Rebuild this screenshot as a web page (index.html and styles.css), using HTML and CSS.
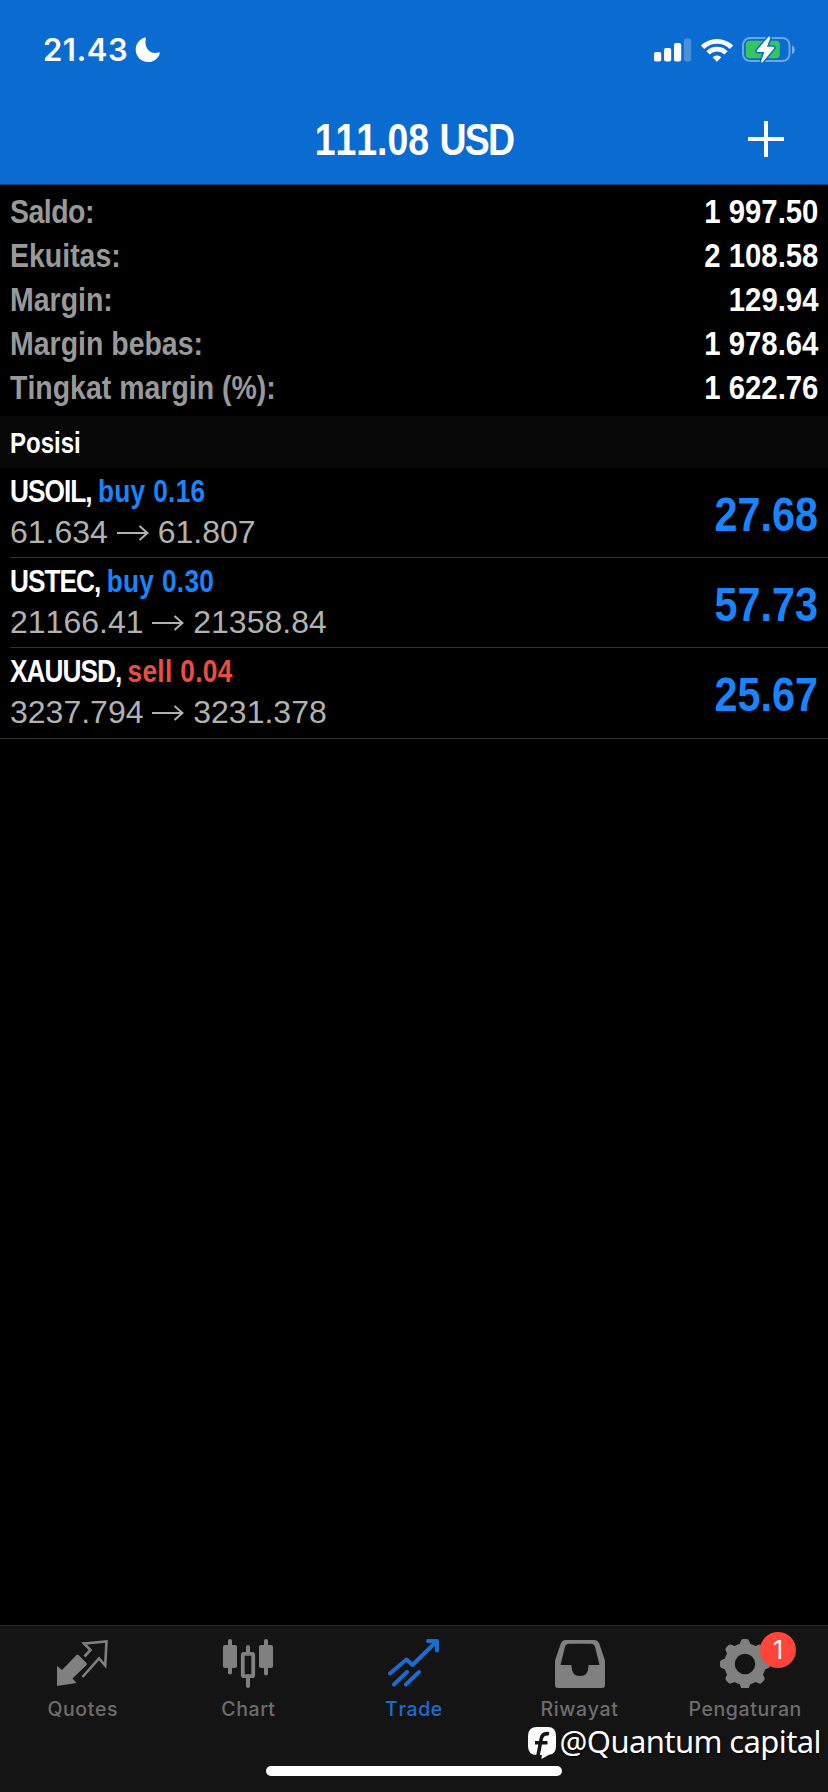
FILE: index.html
```html
<!DOCTYPE html>
<html lang="id">
<head>
    <meta charset="UTF-8">
    <meta name="viewport" content="width=device-width, initial-scale=1.0">
    <title>Trade</title>
    <link rel="stylesheet" href="styles.css">
</head>
<body>
    <div class="app">
        <header class="header">
            <div class="status-bar">
                <span class="time">21.43</span>
                <svg class="moon" width="26" height="26" viewBox="0 0 26 26"><path fill="#fff" d="M9.6.6C4.200 2.500.7 7.200.7 12.800.7 19.600 6.300 25 13.200 25c5.400 0 10-3.300 11.500-8.600.2-.9-.4-1.300-1.200-1-7.900 2.400-14.800-4.400-12.700-13.500.2-.9-.3-1.600-1.200-1.300z"/></svg>
                <div class="status-icons">
                    <svg width="38" height="24" viewBox="0 0 38 24">
                        <rect x="0" y="14" width="7.200" height="9.500" rx="2" fill="#fff"/>
                        <rect x="10" y="10" width="7.200" height="13.500" rx="2" fill="#fff"/>
                        <rect x="20" y="5" width="7.200" height="18.500" rx="2" fill="#fff"/>
                        <rect x="30" y="0.500" width="7.200" height="23" rx="2" fill="#fff" opacity=".25"/>
                    </svg>
                    <svg class="wifi" width="32" height="24" viewBox="0 0 32 24" fill="none" stroke="#fff" stroke-width="4.700">
                        <path d="M1.600 9.300a20.500 20.500 0 0 1 28.800 0"/>
                        <path d="M7 14.800a12.800 12.800 0 0 1 18 0"/>
                        <path d="M16 23.800l-4.400-4.500a6.300 6.300 0 0 1 8.800 0z" fill="#fff" stroke="none"/>
                    </svg>
                    <svg class="battery" width="54" height="28" viewBox="0 0 54 28">
                        <rect x="1" y="2" width="46.500" height="23" rx="7" fill="none" stroke="#fff" stroke-opacity=".4" stroke-width="2"/>
                        <path d="M50 9.500c3.500 1 3.500 7.500 0 8.500z" fill="#fff" opacity=".45"/>
                        <rect x="3.800" y="4.800" width="34" height="17.500" rx="4" fill="#34c759"/>
                        <path d="M26.500.8L15 14.200q-1 1.800 1 1.800h6.300l-3.100 9.300q0 2 1.600.6L32 12.500q.8-1.800-1-1.800h-6L28.200 2q.1-2.200-1.700-1.200z" fill="#fff" stroke="#0a6bd1" stroke-width="3" paint-order="stroke"/>
                    </svg>
                </div>
            </div>
            <div class="title-bar">
                <h1 class="title">111.08 <span class="currency">USD</span></h1>
                <svg class="add" width="36" height="36" viewBox="0 0 36 36"><path d="M18 0v36M0 18h36" stroke="#fff" stroke-width="4"/></svg>
            </div>
        </header>

        <section class="summary">
            <div class="summary-row"><span class="label tight">Saldo:</span><span class="value">1 997.50</span></div>
            <div class="summary-row"><span class="label">Ekuitas:</span><span class="value">2 108.58</span></div>
            <div class="summary-row"><span class="label">Margin:</span><span class="value">129.94</span></div>
            <div class="summary-row"><span class="label">Margin bebas:</span><span class="value">1 978.64</span></div>
            <div class="summary-row"><span class="label">Tingkat margin (%):</span><span class="value">1 622.76</span></div>
        </section>

        <h2 class="section-head"><span>Posisi</span></h2>

        <ul class="positions">
            <li class="position">
                <div class="info">
                    <div class="symbol">USOIL, <span class="buy">buy 0.16</span></div>
                    <div class="prices">61.634 <svg class="arrow" viewBox="0 0 32 20"><path d="M0 10h30M22.500 3l8 7-8 7"/></svg> 61.807</div>
                </div>
                <div class="profit">27.68</div>
            </li>
            <li class="position">
                <div class="info">
                    <div class="symbol">USTEC, <span class="buy">buy 0.30</span></div>
                    <div class="prices">21166.41 <svg class="arrow" viewBox="0 0 32 20"><path d="M0 10h30M22.500 3l8 7-8 7"/></svg> 21358.84</div>
                </div>
                <div class="profit">57.73</div>
            </li>
            <li class="position">
                <div class="info">
                    <div class="symbol">XAUUSD, <span class="sell">sell 0.04</span></div>
                    <div class="prices">3237.794 <svg class="arrow" viewBox="0 0 32 20"><path d="M0 10h30M22.500 3l8 7-8 7"/></svg> 3231.378</div>
                </div>
                <div class="profit">25.67</div>
            </li>
        </ul>

        <footer class="footer">
            <nav class="tabs">
                <a class="tab">
                    <svg class="icon" viewBox="0 0 52 52">
                        <path fill="currentColor" d="M0 30l5 4L19.500 19q1-1 2 0l8 8q1 1 0 2L15.500 42.500l4 4.500L0 50z"/>
                        <path fill="none" stroke="currentColor" stroke-width="2.600" d="M27.500 20.500l6-6.500-6.500-6.500L49.500 5.500l-1.300 24-6.200-7L25.500 41"/>
                    </svg>
                    <span>Quotes</span>
                </a>
                <a class="tab">
                    <svg class="icon" viewBox="0 0 52 52">
                        <g fill="currentColor">
                            <rect x="1" y="9" width="14" height="23" rx="2"/>
                            <rect x="6" y="3" width="4" height="35.500" rx="2"/>
                            <rect x="37" y="9" width="14" height="23" rx="2"/>
                            <rect x="42" y="3" width="4" height="36.500" rx="2"/>
                            <rect x="24" y="9" width="4" height="10" rx="2"/>
                            <rect x="24" y="40" width="4" height="12" rx="2"/>
                        </g>
                        <rect x="20.800" y="17.800" width="10.400" height="22.400" rx="1" fill="none" stroke="currentColor" stroke-width="3.800"/>
                    </svg>
                    <span>Chart</span>
                </a>
                <a class="tab active">
                    <svg class="icon" viewBox="0 0 52 52" fill="none" stroke="currentColor" stroke-width="4" stroke-linecap="round" stroke-linejoin="round">
                        <path d="M2 37.500L18.500 23.500l6 5.500L47.500 6.500M40 5h9v9.500M6 48.500l13-12.500M18 48.500l13-12.500"/>
                    </svg>
                    <span>Trade</span>
                </a>
                <a class="tab">
                    <svg class="icon" viewBox="0 0 52 52">
                        <path fill="currentColor" fill-rule="evenodd" d="M12 4h28q4 0 5.200 3.500L50.500 23q.5 1.500.5 3v23q0 3-3 3H4q-3 0-3-3V26q0-1.500.5-3L6.800 7.500Q8 4 12 4zM15.500 7.800q-3.500 0-4.500 3L6.500 29h10.300q.7 0 .7 1 0 10 8.500 10t8.500-10q0-1 .7-1h10.300L41 10.800q-1-3-4.500-3z"/>
                    </svg>
                    <span>Riwayat</span>
                </a>
                <a class="tab">
                    <svg class="icon" viewBox="0 0 52 52">
                        <circle cx="26" cy="28" r="15.500" fill="none" stroke="currentColor" stroke-width="10.500"/>
                        <g fill="currentColor">
                            <path id="tooth" d="M18.500 9.500q2-.5 2.800-3l.5-1.500q.7-2 2.500-2h3.400q1.800 0 2.500 2l.5 1.500q.8 2.500 2.800 3z"/>
                            <use href="#tooth" transform="rotate(45 26 28)"/>
                            <use href="#tooth" transform="rotate(90 26 28)"/>
                            <use href="#tooth" transform="rotate(135 26 28)"/>
                            <use href="#tooth" transform="rotate(180 26 28)"/>
                            <use href="#tooth" transform="rotate(225 26 28)"/>
                            <use href="#tooth" transform="rotate(270 26 28)"/>
                            <use href="#tooth" transform="rotate(315 26 28)"/>
                        </g>
                    </svg>
                    <span>Pengaturan</span>
                    <b class="badge">1</b>
                </a>
            </nav>
            <div class="home-indicator"></div>
            <div class="watermark">
                <svg width="29" height="33" viewBox="0 0 29 33">
                    <path fill="#fff" d="M9 0h11q8 0 8 9v10q0 8-7 8.800L13.500 32l.3-4H9q-9 0-9-9V9q0-9 9-9z"/>
                    <path fill="none" stroke="#141414" stroke-width="3.600" d="M21 6.800q-6.500-1-7.700 4.700L10 28.500M7 15.800h12.500"/>
                </svg>
                <span>@Quantum capital</span>
            </div>
        </footer>
    </div>
</body>
</html>
```
FILE: styles.css
```css
* {
    box-sizing: border-box;
}

body {
    margin: 0;
    background-color: #000;
    font-family: "Liberation Sans", Arial, sans-serif;
    font-kerning: none;
    color: #fff;
}

.app {
    display: flex;
    flex-direction: column;
    width: 828px;
    height: 1792px;
    overflow: hidden;
}

/* Header */
.header {
    height: 185px;
    background-color: #0a6bd1;
    border-bottom: 1px solid #06396d;
}

.status-bar {
    display: flex;
    align-items: center;
    height: 99px;
    padding: 0 32px 0 43px;
}

.time {
    width: 92px;
    font-family: Inter, sans-serif;
    font-size: 31px;
    font-weight: 600;
    letter-spacing: 0.5px;
}

.status-icons {
    display: flex;
    align-items: center;
    margin-left: auto;
}

.wifi {
    margin-left: 9px;
}

.battery {
    margin-left: 9px;
}

.title-bar {
    display: flex;
    align-items: center;
    justify-content: space-between;
    height: 79px;
    padding: 0 44px 0 80px;
}

.title {
    flex: 1;
    margin: 4px 0 0;
    font-size: 43.5px;
    text-align: center;
    transform: scaleX(0.86);
}

.currency {
    letter-spacing: -2px;
}

/* Account summary */
.summary {
    height: 231px;
    padding: 5px 10px 0;
    font-size: 33.5px;
    font-weight: bold;
}

.summary-row {
    display: flex;
    justify-content: space-between;
    height: 44px;
    line-height: 44px;
}

.label {
    color: #999;
    transform: scaleX(0.85);
    transform-origin: left;
}

.tight {
    letter-spacing: -0.6px;
}

.value {
    transform: scaleX(0.875);
    transform-origin: right;
}

.section-head {
    height: 52px;
    margin: 0;
    padding-left: 10px;
    background-color: #080808;
    font-size: 30px;
    line-height: 53px;
}

.section-head span {
    display: inline-block;
    transform: scaleX(0.8);
    transform-origin: left;
}

/* Positions */
.positions {
    flex: 1;
    margin: 0;
    padding: 0;
    list-style: none;
}

.position {
    display: flex;
    justify-content: space-between;
    height: 90px;
    margin-left: 10px;
    padding-right: 10px;
    border-bottom: 1px solid #333;
}

.position:last-child {
    height: 91px;
    margin-left: 0;
    padding-left: 10px;
}

.symbol {
    height: 44px;
    font-size: 32px;
    font-weight: bold;
    letter-spacing: -1.2px;
    line-height: 46px;
    transform: scaleX(0.82);
    transform-origin: left;
}

.buy,
.sell {
    letter-spacing: 0.4px;
}

.buy,
.profit {
    color: #1a84fc;
}

.sell {
    color: #eb4d3f;
}

.prices {
    color: #b2b2b2;
    font-size: 32px;
    line-height: 40px;
}

.arrow {
    width: 32px;
    height: 20px;
    fill: none;
    stroke: #b2b2b2;
    stroke-width: 2;
}

.profit {
    font-size: 47.5px;
    font-weight: bold;
    line-height: 94px;
    transform: scaleX(0.87);
    transform-origin: right;
}

/* Tab bar */
.footer {
    position: relative;
    height: 167px;
    background-color: #141414;
    border-top: 1px solid #292929;
}

.tabs {
    display: flex;
    height: 100px;
}

.tab {
    position: relative;
    display: flex;
    flex: 1;
    flex-direction: column;
    align-items: center;
    padding-top: 10px;
    color: #6e6e6e;
    font-family: Inter, sans-serif;
    font-size: 19.5px;
    font-weight: 500;
    letter-spacing: 0.6px;
}

.tab span {
    margin-top: 9px;
    line-height: 24px;
}

.icon {
    width: 52px;
    height: 52px;
    color: #808080;
}

.active,
.active .icon {
    color: #1b6dd0;
}

.badge {
    position: absolute;
    top: 6px;
    left: 98px;
    width: 36px;
    height: 36px;
    border-radius: 50%;
    background-color: #ff453a;
    color: #fff;
    font-size: 25px;
    font-weight: 400;
    line-height: 36px;
    text-align: center;
}

.home-indicator {
    width: 296px;
    height: 10px;
    margin: 40px auto 0;
    border-radius: 5px;
    background-color: #fff;
}

.watermark {
    position: absolute;
    right: 7px;
    top: 95px;
    display: flex;
    align-items: center;
    font-family: "Noto Sans", sans-serif;
    font-size: 31px;
    letter-spacing: -0.6px;
    line-height: 40px;
    text-shadow: 1px 1px 2px #000;
}

.watermark svg {
    margin-top: 4px;
}

.watermark span {
    margin-left: 3px;
}
```
